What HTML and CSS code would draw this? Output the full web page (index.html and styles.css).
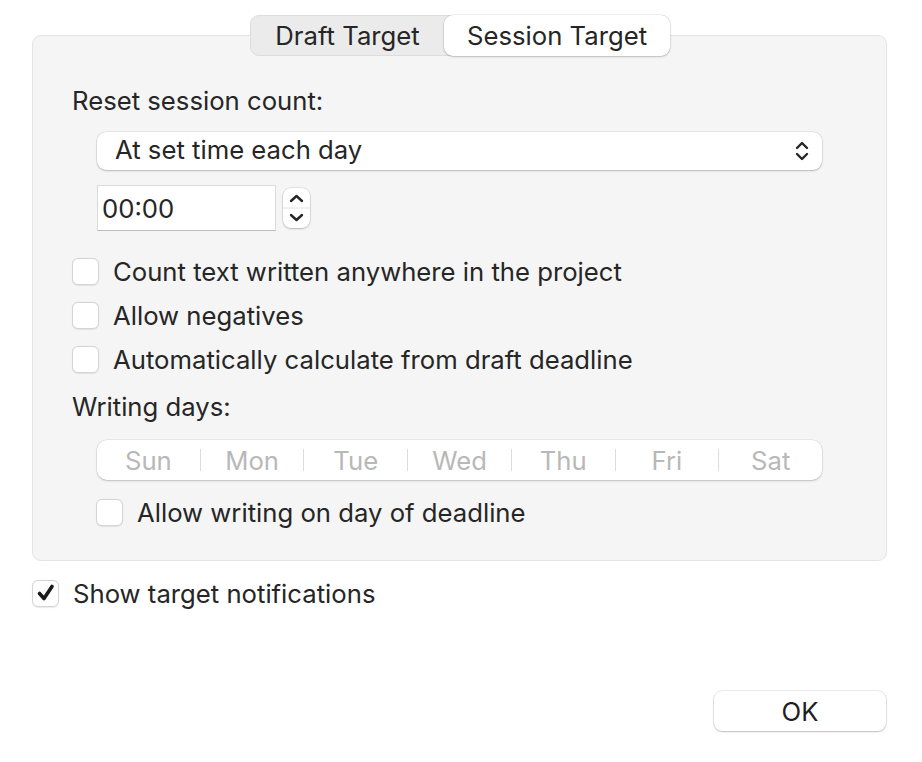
FILE: index.html
```html
<!DOCTYPE html>
<html lang="en">
<head>
  <meta charset="UTF-8">
  <title>Project Targets</title>
  <link rel="stylesheet" href="styles.css">
</head>
<body>
  <div class="window">
    <!-- Tab switcher -->
    <div class="tabs">
      <div class="tab">Draft Target</div>
      <div class="tab active">Session Target</div>
    </div>

    <!-- Session target panel -->
    <div class="panel">
      <div class="label">Reset session count:</div>
      <div class="indent">
        <div class="popup">
          <span>At set time each day</span>
          <svg class="chevrons" width="14" height="22" viewBox="0 0 14 22">
            <path d="M2 8 L7 3 L12 8" />
            <path d="M2 14 L7 19 L12 14" />
          </svg>
        </div>
        <div class="time-row">
          <div class="time-field">00:00</div>
          <div class="stepper">
            <svg width="27" height="40" viewBox="0 0 27 40">
              <path d="M8 13 L13.5 8 L19 13" />
              <line class="divider" x1="0" y1="20" x2="27" y2="20" />
              <path d="M8 27 L13.5 32 L19 27" />
            </svg>
          </div>
        </div>
      </div>

      <div class="check-list">
        <label class="check"><span class="box"></span>Count text written anywhere in the project</label>
        <label class="check"><span class="box"></span>Allow negatives</label>
        <label class="check"><span class="box"></span>Automatically calculate from draft deadline</label>
      </div>

      <div class="label days-label">Writing days:</div>
      <div class="indent">
        <div class="days">
          <span class="day">Sun</span><i class="sep"></i>
          <span class="day">Mon</span><i class="sep"></i>
          <span class="day">Tue</span><i class="sep"></i>
          <span class="day">Wed</span><i class="sep"></i>
          <span class="day">Thu</span><i class="sep"></i>
          <span class="day">Fri</span><i class="sep"></i>
          <span class="day">Sat</span>
        </div>
        <label class="check deadline"><span class="box"></span>Allow writing on day of deadline</label>
      </div>
    </div>

    <label class="check notify">
      <span class="box">
        <svg width="22" height="22" viewBox="0 0 22 22"><path d="M4.5 11.5 L9 16.5 L17 4.5" /></svg>
      </span>
      Show target notifications
    </label>

    <div class="footer">
      <button class="ok">OK</button>
    </div>
  </div>
</body>
</html>
```

FILE: styles.css
```css
body {
  margin: 0;
  background: #ffffff;
  font-family: Inter, "Liberation Sans", sans-serif;
  font-size: 25.7px;
  color: #262626;
}

.window {
  width: 922px;
  height: 762px;
  padding: 15px 35px 0 32px;
  box-sizing: border-box;
  display: flex;
  flex-direction: column;
}

/* Tabs */
.tabs {
  position: relative;
  z-index: 1;
  align-self: flex-start;
  margin-left: 218px;
  margin-bottom: -21px;
  display: flex;
  height: 41px;
  background: #ebebeb;
  border: 1px solid #dddddd;
  border-radius: 9px;
  box-sizing: border-box;
}

.tab {
  display: flex;
  align-items: center;
  justify-content: center;
  line-height: 1;
}

.tab:first-child {
  width: 193px;
}

.tab.active {
  width: 226px;
  margin: -1px -1px -1px 0;
  background: #ffffff;
  border-radius: 9px;
  box-shadow: 0 0 0 0.5px rgba(0, 0, 0, 0.12), 0 1px 2px rgba(0, 0, 0, 0.18);
}

/* Panel */
.panel {
  background: #f5f5f5;
  border: 1px solid #e4e4e4;
  border-radius: 9px;
  padding: 50px 64px 26px 39px;
  display: flex;
  flex-direction: column;
}

.label {
  line-height: 30px;
  height: 30px;
}

.indent {
  padding-left: 25px;
  display: flex;
  flex-direction: column;
}

.popup {
  margin-top: 16px;
  height: 38px;
  line-height: 1;
  background: #ffffff;
  border-radius: 9px;
  box-shadow: 0 0 0 0.5px rgba(0, 0, 0, 0.12), 0 1px 2px rgba(0, 0, 0, 0.2);
  display: flex;
  align-items: center;
  justify-content: space-between;
  padding: 0 13px 2px 18px;
  box-sizing: border-box;
}

.chevrons {
  margin-top: 2px;
}

.chevrons path,
.stepper path {
  fill: none;
  stroke: #262626;
  stroke-width: 2.4;
  stroke-linecap: round;
  stroke-linejoin: round;
}

.time-row {
  margin-top: 15px;
  display: flex;
  align-items: center;
  gap: 7px;
}

.time-field {
  width: 179px;
  height: 46px;
  box-sizing: border-box;
  background: #ffffff;
  border: 1px solid #dadada;
  border-bottom-color: #bdbdbd;
  padding-left: 4px;
  display: flex;
  align-items: center;
}

.stepper {
  width: 27px;
  height: 40px;
  background: #ffffff;
  border-radius: 8px;
  box-shadow: 0 0 0 0.5px rgba(0, 0, 0, 0.14), 0 1px 2px rgba(0, 0, 0, 0.2);
}

.stepper svg {
  display: block;
}

.stepper .divider {
  stroke: #e2e2e2;
  stroke-width: 1;
}

/* Checkboxes */
.check-list {
  margin-top: 18px;
  display: flex;
  flex-direction: column;
}

.check {
  height: 44px;
  display: flex;
  align-items: center;
  gap: 14px;
}

.box {
  width: 27px;
  height: 27px;
  box-sizing: border-box;
  flex-shrink: 0;
  background: #ffffff;
  border: 1px solid #d4d4d4;
  border-radius: 6px;
  box-shadow: 0 0.5px 1px rgba(0, 0, 0, 0.08);
  display: flex;
  align-items: center;
  justify-content: center;
}

.box path {
  fill: none;
  stroke: #1a1a1a;
  stroke-width: 3.6;
  stroke-linecap: round;
  stroke-linejoin: round;
}

.days-label {
  margin-top: 11px;
}

.days {
  margin-top: 18px;
  height: 40px;
  background: #ffffff;
  border-radius: 10px;
  box-shadow: 0 0 0 0.5px rgba(0, 0, 0, 0.1), 0 1px 2px rgba(0, 0, 0, 0.18);
  display: flex;
  align-items: center;
}

.day {
  flex: 1;
  text-align: center;
  color: #b8b8b8;
}

.sep {
  width: 1px;
  height: 22px;
  background: #dcdcdc;
}

.check.deadline {
  margin-top: 10px;
  margin-left: -1px;
}

.check.notify {
  margin-top: 10px;
}

/* Footer */
.footer {
  margin-top: 76px;
  display: flex;
  justify-content: flex-end;
  padding-right: 1px;
}

.ok {
  width: 172px;
  height: 40px;
  font-family: inherit;
  font-size: 25.7px;
  color: #1f1f1f;
  background: #ffffff;
  border: none;
  border-radius: 8px;
  box-shadow: 0 0 0 0.5px rgba(0, 0, 0, 0.14), 0 1px 2px rgba(0, 0, 0, 0.2);
}
```
